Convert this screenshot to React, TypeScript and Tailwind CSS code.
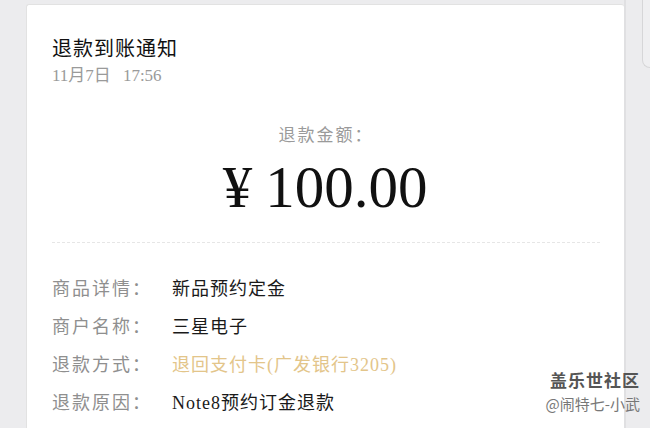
import React from 'react'

const rows = [
  { label: '商品详情', value: '新品预约定金', tone: 'text-[#1a1a1a]' },
  { label: '商户名称', value: '三星电子', tone: 'text-[#1a1a1a]' },
  { label: '退款方式', value: '退回支付卡(广发银行3205)', tone: 'text-[#e3c58a]' },
  { label: '退款原因', value: 'Note8预约订金退款', tone: 'text-[#1a1a1a]' },
]

export default function App() {
  return (
    <div
      className="relative w-[650px] h-[428px] overflow-hidden bg-[#ececee] flex"
      style={{ fontFamily: '"Liberation Serif", "Noto Sans CJK SC", serif' }}
    >
      {/* 左侧留白 */}
      <div className="w-[26px] shrink-0" />

      {/* 卡片 */}
      <div className="mt-[4px] w-[598px] shrink-0 bg-white rounded-t-[3px] border-l border-t border-[#e2e2e2] pl-[25px] pr-[24px]">
        <div className="pt-[30px] text-[20px] leading-[28px] text-[#111] tracking-[1px]">退款到账通知</div>
        <div className="mt-[3px] text-[17px] leading-[20px] text-[#9a9a9a] flex gap-[12px]">
          <span>11月7日</span>
          <span>17:56</span>
        </div>

        <div className="mt-[39px] text-center text-[17px] leading-[22px] text-[#9a9a9a] tracking-[2px]">退款金额：</div>
        <div className="mt-[11px] text-center text-[59px] leading-[58px] text-[#111] pr-[2px]">
          ¥<span className="ml-[13px]">100.00</span>
        </div>

        <div className="mt-[26px] border-t-[1.5px] border-dashed border-[#e6e6e6]" />

        <div className="mt-[35px] flex flex-col gap-[15px]">
          {rows.map((r) => (
            <div key={r.label} className="flex items-center text-[18px] leading-[23px]">
              <span className="w-[120px] text-[#8f8f8f] tracking-[2px]">{r.label}：</span>
              <span className={`${r.tone} tracking-[1px]`}>{r.value}</span>
            </div>
          ))}
        </div>
      </div>

      {/* 右侧边栏 */}
      <div className="flex-1 border-l-[2px] border-[#e0e0e2] flex justify-end">
        <div className="w-[8px] h-[68px] border-l border-b border-[#d6d6d8] rounded-bl-[8px] bg-[#efeff1]" />
      </div>

      {/* 水印 */}
      <div className="absolute right-[10px] top-[369px] flex flex-col items-end" style={{ fontFamily: '"Noto Sans CJK SC", sans-serif' }}>
        <span className="text-[17px] leading-[22px] font-bold text-[#555] tracking-[1px]">盖乐世社区</span>
        <span className="mt-[4px] text-[15px] leading-[18px] text-[#777]">@闹特七-小武</span>
      </div>
    </div>
  )
}
